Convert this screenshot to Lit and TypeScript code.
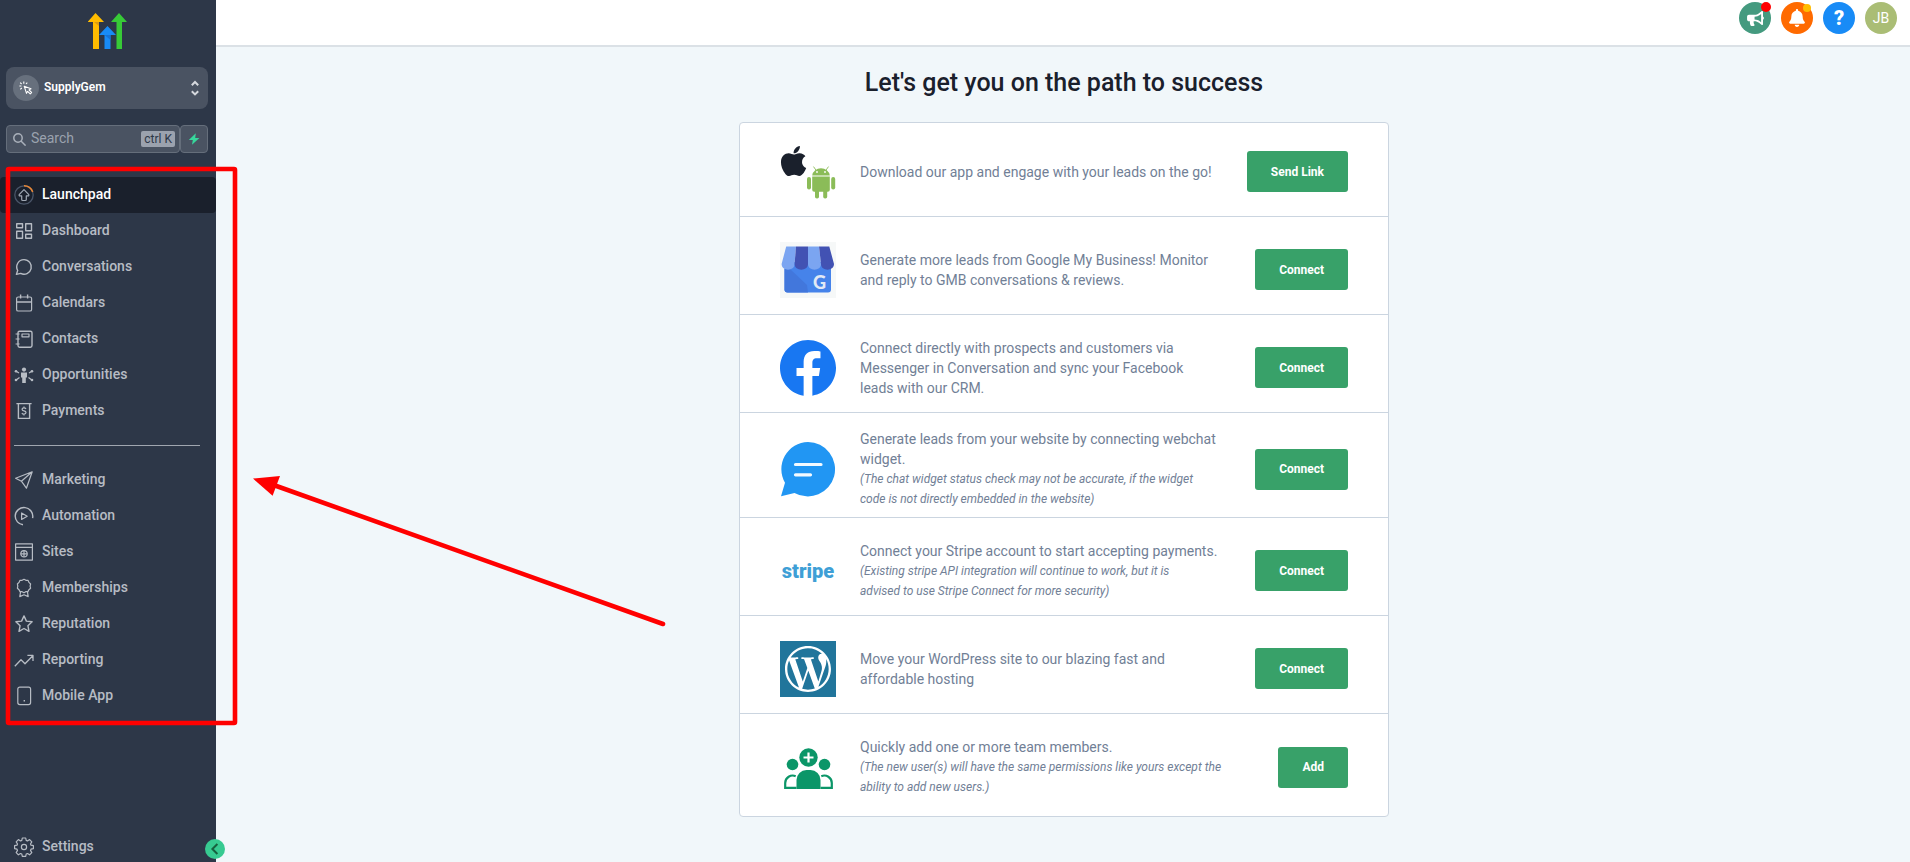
import { LitElement, html, css, svg, TemplateResult } from "lit";
import { customElement, property } from "lit/decorators.js";
import { classMap } from "lit/directives/class-map.js";

/* Line icons of the side menu, each drawn on a 20 x 20 grid. */
const navIcons: Record<string, TemplateResult> = {
  launchpad: svg`
    <circle cx="10" cy="10" r="9.2" stroke="#4a5568" stroke-width="1.3"/>
    <path d="M10 .8a9.2 9.2 0 0 1 8.7 6.2" stroke="#ed8936" stroke-width="1.5"/>
    <path d="M10 4.6 14.6 9.4c.6.7.3 1.5-.6 1.5h-1.7v3.6a1 1 0 0 1-1 1H8.7a1 1 0 0 1-1-1v-3.6H6c-.9 0-1.2-.8-.6-1.5z"/>`,
  dashboard: svg`<path d="M2.7 2.7h5.8v4H2.7zM11.7 2.7h5.8v7h-5.8zM2.7 10.2h5.8v7H2.7zM11.7 13.2h5.8v4h-5.8z" stroke-width="1.4"/>`,
  conversations: svg`<path d="M2.4 17.4l1.3-3.9A7.3 7.3 0 0 1 10 2.6a7.3 7.3 0 1 1-3.3 13.8z" stroke-width="1.4"/>`,
  calendars: svg`<rect x="2.6" y="4" width="15" height="14" rx="1.6"/><path d="M2.6 9h15M6.6 1.6v4M13.6 1.6v4" stroke-width="1.4"/>`,
  contacts: svg`<rect x="4" y="2.2" width="14" height="16" rx="1.6" stroke-width="1.4"/><rect x="8" y="5" width="7" height="2.8"/><path d="M1.6 5h4M1.6 10h4M1.6 15h4"/>`,
  opportunities: svg`
    <g fill="currentColor" stroke="none"><circle cx="10" cy="4.6" r="2.1"/><path d="M7 7.6h6v5h-1.2V18H8.2v-5.4H7z"/>
    <circle cx="2" cy="6.2" r="1.3"/><circle cx="18" cy="6.2" r="1.3"/><circle cx="2" cy="15" r="1.3"/><circle cx="18" cy="15" r="1.3"/></g>
    <path d="M2.500 6.400 5 8M17.500 6.400 15 8M2.500 14.800 5.500 12.600M17.500 14.800 14.500 12.600"/>`,
  payments: svg`<path d="M2.4 2.6h15.2M4.4 2.6v14.8h11.2V2.6" stroke-width="1.4"/><path d="M12 8c-.4-.8-1.1-1.1-2-1.1-1.2 0-1.9.6-1.9 1.5 0 2.2 3.9.9 3.9 3.2 0 .9-.8 1.5-2 1.5-1 0-1.7-.4-2.1-1.2M10 5.6v1.3M10 13.1v1.3"/>`,
  marketing: svg`<path d="M18.2 1.8 1.6 8.2l5.800 3zM18.2 1.8 12.4 18.200l-5-7z"/>`,
  automation: svg`<path d="M18.6 12.2A8.8 8.8 0 1 0 1.2 10c0 4.5 3.3 8.3 7.8 8.8" stroke-width="1.4"/><path d="M7.6 7v6.4l5.6-3.2z"/>`,
  sites: svg`<path d="M1.6 1.9h16.8v16.2H1.6zM1.6 5.4h16.8"/><circle cx="10" cy="11.8" r="3.2"/><path d="M6.800 11.8h6.4M10 8.6v6.4"/>`,
  memberships: svg`<path d="M10 1.3l1.9 1 2.2.1.9 2 1.6 1.6-.5 2.1.5 2.1-1.7 1.5-1 1.9-2.2.1-1.7 1.1-1.9-1.1-2.1-.1-1-1.9-1.6-1.5.4-2.1-.4-2.1 1.6-1.6.9-2 2.2-.1z"/><path d="M6.6 13.6 5.8 18.6 10 16.8l4.2 1.8-.8-5"/>`,
  reputation: svg`<path d="M10 1.9l2.4 5.2 5.7.7-4.2 3.9 1.1 5.6-5-2.8-5 2.8 1.1-5.6-4.2-3.9 5.7-.7z" stroke-width="1.4"/>`,
  reporting: svg`<path d="M.8 16.2 7 9.8l4 4 7.8-8M13.4 5.4h5.6v5.6" stroke-width="1.3"/>`,
  mobile: svg`<rect x="3.8" y="1.2" width="12.8" height="17.4" rx="2"/><path d="M9.6 14.8h1.4" stroke-width="1.6"/>`,
  settings: svg`<circle cx="10" cy="10" r="2.6"/><path d="M8.3 1h3.4l.5 2.4 1.3.6 2.1-1.4 2.2 2.3-1.3 2.1.5 1.2 2.4.5v2.9l-2.4.6-.5 1.2 1.3 2.2-2.2 2.2-2.1-1.3-1.3.5-.5 2.4H8.3l-.5-2.4-1.3-.5-2.1 1.3-2.2-2.2 1.3-2.2-.5-1.2-2.4-.6V8.7L3 8.2 3.5 7 2.2 4.9l2.2-2.3L6.5 4l1.3-.6z"/>`,
};

/* Brand pictures of the setup list, each drawn on a 56 x 56 grid. */
const brandIcons: Record<string, TemplateResult> = {
  apps: svg`
    <path transform="translate(.7 -.1) scale(.067)" fill="#1a202c" d="M318.7 268.7c-.2-36.7 16.4-64.4 50-84.8-18.8-26.9-47.2-41.7-84.7-44.6-35.5-2.8-74.3 20.7-88.5 20.7-15 0-49.4-19.7-76.4-19.7C63.3 141.2 4 184.8 4 273.5q0 39.3 14.4 81.2c12.8 36.7 59 126.7 107.2 125.2 25.2-.6 43-17.9 75.8-17.9 31.8 0 48.3 17.9 76.4 17.9 48.6-.7 90.4-82.5 102.6-119.3-65.2-30.7-61.7-90-61.7-91.9zm-56.6-164.2c27.3-32.4 24.8-61.9 24-72.5-24.1 1.4-52 16.4-67.9 34.9-17.5 19.8-27.8 44.3-25.6 71.9 26.1 2 49.9-11.4 69.5-34.3z"/>
    <g fill="#8bbc58"><path d="M32.2 31.4a8.9 8.4 0 0 1 17.6 0zM32.2 32.5h17.6v13.3a2 2 0 0 1-2 2h-13.6a2 2 0 0 1-2-2z"/>
    <rect x="27" y="33" width="4" height="12.6" rx="2"/><rect x="51.2" y="33" width="4" height="12.6" rx="2"/>
    <rect x="35" y="44" width="4" height="10.6" rx="1.8"/><rect x="43.2" y="44" width="4" height="10.6" rx="1.8"/></g>
    <path d="M33.5 22.6l2.4 3.4M48.5 22.6l-2.4 3.4" stroke="#8bbc58" stroke-width=".9"/>
    <circle cx="37" cy="28" r=".9" fill="#fff"/><circle cx="45" cy="28" r=".9" fill="#fff"/>`,
  gmb: svg`
    <rect width="56" height="56" fill="#f6f8f8"/>
    <path d="M4.5 20h46.5v27.5a3 3 0 0 1-3 3H7.5a3 3 0 0 1-3-3z" fill="#4683ea"/>
    <path d="M10 27l17 16 1 7.5H7.5a3 3 0 0 1-3-3V27z" fill="#4277dc"/>
    <path d="M6.2 4.5H16L14.6 22c0 7.5-13 7.5-13 0z" fill="#7ba5f1"/>
    <path d="M16 4.5h12V22c0 7.5-13.4 7.5-13.4 0z" fill="#4252b3"/>
    <path d="M28 4.5h11L41 22c0 7.5-13 7.5-13 0z" fill="#7ba5f1"/>
    <path d="M39 4.5h10.3L54 22c0 7.5-13 7.5-13 0z" fill="#4252b3"/>
    <text x="33" y="46.5" font-family="Lato, sans-serif" font-weight="900" font-size="18" fill="#e2e9f5">G</text>`,
  facebook: svg`<path transform="translate(-.9 -.9) scale(.1129)" fill="#1877f2" d="M504 256C504 119 393 8 256 8S8 119 8 256c0 123.78 90.69 226.38 209.25 245V327.69h-63V256h63v-54.64c0-62.15 37-96.48 93.67-96.48 27.14 0 55.52 4.84 55.52 4.84v61h-31.28c-30.8 0-40.41 19.12-40.41 38.73V256h68.78l-11 71.69h-57.78V501C413.31 482.38 504 379.78 504 256z"/>`,
  chat: svg`
    <path fill="#2196f3" d="M28 1a27.2 27.2 0 1 1-13.5 50.9L1 55.3l4-13.5A27.2 27.2 0 0 1 28 1z"/>
    <path d="M15.5 23.5h25.5M15.5 33.8h15" stroke="#f4faff" stroke-width="3.2" stroke-linecap="round"/>`,
  stripe: svg`<text x="28" y="35" text-anchor="middle" font-family="Roboto, sans-serif" font-weight="900" font-size="20" fill="#3f9fd6">stripe</text>`,
  wordpress: svg`
    <rect width="56" height="56" fill="#21759b"/>
    <path transform="translate(5 5) scale(1.916)" fill="#fff" d="M21.469 6.825c.84 1.537 1.318 3.3 1.318 5.175 0 3.979-2.156 7.456-5.363 9.325l3.295-9.527c.615-1.54.82-2.771.82-3.864 0-.405-.026-.78-.07-1.11m-7.981.105c.647-.03 1.232-.105 1.232-.105.582-.075.514-.93-.067-.899 0 0-1.755.135-2.88.135-1.064 0-2.85-.15-2.85-.15-.585-.03-.661.855-.075.885 0 0 .54.061 1.125.09l1.68 4.605-2.37 7.08L5.354 6.9c.649-.03 1.234-.1 1.234-.1.585-.075.516-.93-.065-.896 0 0-1.746.138-2.874.138-.2 0-.438-.008-.69-.015C4.911 3.15 8.235 1.215 12 1.215c2.809 0 5.365 1.072 7.286 2.833-.046-.003-.091-.009-.141-.009-1.06 0-1.812.923-1.812 1.914 0 .89.513 1.643 1.06 2.531.411.72.89 1.643.89 2.977 0 .915-.354 1.994-.821 3.479l-1.075 3.585-3.9-11.61.001.014zM12 22.784c-1.059 0-2.081-.153-3.048-.437l3.237-9.406 3.315 9.087c.024.053.05.101.078.149-1.12.393-2.325.609-3.582.609M1.211 12c0-1.564.336-3.05.935-4.39L7.29 21.709C3.694 19.96 1.212 16.271 1.211 12M12 0C5.385 0 0 5.385 0 12s5.385 12 12 12 12-5.385 12-12S18.615 0 12 0"/>`,
  team: svg`
    <g fill="#0b9668"><circle cx="28.500" cy="18.5" r="9.2"/><circle cx="12.500" cy="25.5" r="5.8"/><circle cx="44.500" cy="25.5" r="5.8"/>
    <path d="M16.5 50V41a10 10 0 0 1 10-10h4a10 10 0 0 1 10 10v9z"/></g>
    <path d="M16.5 48.9H5.2V44a7.5 7.5 0 0 1 10.5-6.8M40.5 48.9h11.3V44a7.5 7.5 0 0 0-10.5-6.8" fill="none" stroke="#0b9668" stroke-width="2.2"/>
    <path d="M28.5 13.5v10M23.5 18.5h10" stroke="#fff" stroke-width="2.2"/>`,
};

interface NavEntry { icon: string; label: string; active?: boolean; }
interface Task { icon: string; text: string; note?: string; action: string; }

const mainNav: NavEntry[] = [
  { icon: "launchpad", label: "Launchpad", active: true },
  { icon: "dashboard", label: "Dashboard" },
  { icon: "conversations", label: "Conversations" },
  { icon: "calendars", label: "Calendars" },
  { icon: "contacts", label: "Contacts" },
  { icon: "opportunities", label: "Opportunities" },
  { icon: "payments", label: "Payments" },
];

const growthNav: NavEntry[] = [
  { icon: "marketing", label: "Marketing" },
  { icon: "automation", label: "Automation" },
  { icon: "sites", label: "Sites" },
  { icon: "memberships", label: "Memberships" },
  { icon: "reputation", label: "Reputation" },
  { icon: "reporting", label: "Reporting" },
  { icon: "mobile", label: "Mobile App" },
];

const tasks: Task[] = [
  { icon: "apps", text: "Download our app and engage with your leads on the go!", action: "Send Link" },
  { icon: "gmb", text: "Generate more leads from Google My Business! Monitor and reply to GMB conversations & reviews.", action: "Connect" },
  { icon: "facebook", text: "Connect directly with prospects and customers via Messenger in Conversation and sync your Facebook leads with our CRM.", action: "Connect" },
  { icon: "chat", text: "Generate leads from your website by connecting webchat widget.", note: "(The chat widget status check may not be accurate, if the widget code is not directly embedded in the website)", action: "Connect" },
  { icon: "stripe", text: "Connect your Stripe account to start accepting payments.", note: "(Existing stripe API integration will continue to work, but it is advised to use Stripe Connect for more security)", action: "Connect" },
  { icon: "wordpress", text: "Move your WordPress site to our blazing fast and affordable hosting", action: "Connect" },
  { icon: "team", text: "Quickly add one or more team members.", note: "(The new user(s) will have the same permissions like yours except the ability to add new users.)", action: "Add" },
];

const base = css`
  * { box-sizing: border-box; }
  button { font: inherit; border: 0; padding: 0; cursor: pointer; }
  svg { display: block; flex: none; }
`;

@customElement("side-link")
class SideLink extends LitElement {
  static styles = [base, css`
    :host { display: block; }
    .link { display: flex; align-items: center; gap: 8px; height: 36px; padding: 0 14px; color: #b7bcc4;
      font-size: 14px; font-weight: 500; line-height: 20px; text-decoration: none; border-radius: 4px; }
    .active { background: #1a202c; color: #fff; }
    .active svg { color: #a0a8b4; }
    .label { padding-bottom: 2px; }
  `];
  @property() icon = "";
  @property() label = "";
  @property({ type: Boolean }) active = false;

  render() {
    return html`<a class=${classMap({ link: true, active: this.active })} href="#${this.icon}">
      <svg width="20" height="20" viewBox="0 0 20 20" fill="none" stroke="currentColor" stroke-width="1.2" stroke-linejoin="round" aria-hidden="true">${navIcons[this.icon]}</svg>
      <span class="label">${this.label}</span>
    </a>`;
  }
}

@customElement("side-bar")
class SideBar extends LitElement {
  static styles = [base, css`
    :host { display: flex; flex-direction: column; position: relative; width: 216px; flex: none;
      padding-top: 13px; background: #2d3748; }
    .logo { align-self: center; margin: 0 0 18px; }
    .account { display: flex; align-items: center; gap: 5px; height: 42px; margin: 0 8px 16px 6px; padding: 0 8px 0 7px;
      border-radius: 8px; background: #4a5362; color: #fff; font-size: 12px; font-weight: 600; text-align: left; }
    .badge { display: grid; place-items: center; width: 26px; height: 26px; border-radius: 50%; background: #67707d; }
    .name { flex: 1; padding-bottom: 2px; }
    .tools { display: flex; height: 28px; margin: 0 8px 24px 6px; }
    .search { display: flex; align-items: center; gap: 5px; flex: 1; min-width: 0; padding: 0 4px 0 6px;
      border: 1px solid #656e7b; border-radius: 4px; background: #4a5362; }
    .field { flex: 1; min-width: 0; width: 0; padding: 0 0 2px; border: 0; outline: 0; background: none; color: #fff;
      font: 14px/20px Roboto, sans-serif; }
    .field::placeholder { color: #9aa2ae; opacity: 1; }
    .keys { padding: 0 3px; border-radius: 2px; background: #9ba2ae; color: #2d3748; font: 12px/16px Roboto, sans-serif; white-space: nowrap; }
    .bolt { display: grid; place-items: center; width: 28px; border: 1px solid #656e7b; border-radius: 4px; background: #4a5362; }
    .divider { height: 1px; margin: 16px 16px 16px 14px; border: 0; background: #a0a6b0; }
    .settings { margin: auto 0 -3px; }
    .collapse { position: absolute; right: -9px; bottom: 3px; display: grid; place-items: center; width: 20px; height: 20px;
      border-radius: 50%; background: #37ca91; }
  `];

  private links(list: NavEntry[]) {
    return list.map((n) => html`<side-link .icon=${n.icon} .label=${n.label} ?active=${n.active}></side-link>`);
  }

  render() {
    return html`
      <svg class="logo" width="40" height="36" viewBox="0 0 40 36" aria-hidden="true">
        <path fill="#ffbc00" d="M7.500 0l8.500 9h-5v27H5V9h-5.500z"/><path fill="#d99b13" d="M6 9h5v4z"/>
        <path fill="#37ca37" d="M31 0l8 9h-5v27h-5.500V9h-5.500z"/>
        <path fill="#188bf6" d="M19.500 13l8.500 9h-5.500v14h-6V22H11z"/><path fill="#1573d6" d="M16.500 22h6v5z"/>
      </svg>
      <button class="account" type="button">
        <span class="badge"><svg width="14" height="14" viewBox="0 0 14 14" fill="none" stroke="#fff" stroke-width="1.1" stroke-linejoin="round" aria-hidden="true">
          <path d="M5.2 5.2l6.800 2.500-2 1.200 2.600 2.600-1.400 1.400-2.600-2.600-1.100 2z"/><path d="M4.800 2.800V.6M2.600 3 1.200 1.600M2.400 5H.4M2.800 7 1.300 8.400M7 3l1.300-1.400"/></svg></span>
        <span class="name">SupplyGem</span>
        <svg width="10" height="16" viewBox="0 0 10 16" fill="none" stroke="#d5d8dd" stroke-width="2" aria-hidden="true"><path d="M1.800 5.200 5 2l3.200 3.200M1.800 11.200 5 14.400l3.200-3.200"/></svg>
      </button>
      <div class="tools">
        <label class="search">
          <svg width="13" height="13" viewBox="0 0 13 13" fill="none" stroke="#a9b0ba" stroke-width="1.5" aria-hidden="true"><circle cx="5" cy="5" r="4.2"/><path d="M8 8l4.600 4.600"/></svg>
          <input class="field" type="text" placeholder="Search" aria-label="Search" />
          <kbd class="keys">ctrl K</kbd>
        </label>
        <button class="bolt" type="button" aria-label="Quick actions">
          <svg width="12" height="12" viewBox="0 0 12 12" fill="#37d69b" aria-hidden="true"><path d="M7.800.2.8 7h4L4 11.800 11.400 5H7.200z"/></svg>
        </button>
      </div>
      <nav>
        ${this.links(mainNav)}
        <hr class="divider" />
        ${this.links(growthNav)}
      </nav>
      <side-link class="settings" icon="settings" label="Settings"></side-link>
      <button class="collapse" type="button" aria-label="Collapse menu">
        <svg width="12" height="12" viewBox="0 0 12 12" fill="none" stroke="#17603f" stroke-width="2" aria-hidden="true"><path d="M8.400 1 3.400 6l5 5"/></svg>
      </button>`;
  }
}

@customElement("top-bar")
class TopBar extends LitElement {
  static styles = [base, css`
    :host { display: flex; justify-content: flex-end; gap: 10px; height: 47px; padding: 2px 13px 0; background: #fff;
      border-bottom: 2px solid #dbe1e6; }
    .round { position: relative; display: grid; place-items: center; width: 32px; height: 32px; border-radius: 50%; color: #fff; line-height: 32px; }
    .news { background: #449a7f; }
    .alerts { background: #ff6a00; }
    .help { background: #188bf6; font-size: 20px; font-weight: 900; }
    .user { background: #aabd75; font-size: 14px; }
    .dot { position: absolute; border-radius: 50%; top: 0; right: 0; }
    .red { width: 10px; height: 10px; background: #f00; }
    .yellow { width: 8px; height: 8px; top: 2px; right: 2px; background: #ffbc00; }
  `];

  render() {
    return html`
      <button class="round news" type="button" aria-label="News">
        <svg width="17" height="15" viewBox="0 0 576 512" fill="#fff" aria-hidden="true"><path d="M576 240c0-23.63-12.95-44.04-32-55.12V32.01C544 23.26 537.02 0 512 0c-7.12 0-14.19 2.38-19.98 7.02l-85.03 68.03C364.28 109.19 310.66 128 256 128H64c-35.35 0-64 28.65-64 64v96c0 35.35 28.65 64 64 64h33.7c-1.39 10.48-2.18 21.14-2.18 32 0 39.77 9.26 77.35 25.56 110.94 5.19 10.69 16.52 17.06 28.4 17.06h74.28c26.05 0 41.69-29.84 25.9-50.56-16.4-21.52-26.15-48.36-26.15-77.44 0-11.11 1.62-21.79 4.41-32H256c54.66 0 108.28 18.81 150.98 52.95l85.03 68.03a32.023 32.023 0 0 0 19.98 7.02c24.92 0 32-22.78 32-32V295.13C563.05 284.04 576 263.63 576 240zm-96 141.42l-33.05-26.44C392.95 311.78 325.12 288 256 288v-96c69.12 0 136.95-23.78 190.95-66.98L480 98.58v282.84z"/></svg>
        <span class="dot red"></span>
      </button>
      <button class="round alerts" type="button" aria-label="Notifications">
        <svg width="16" height="18" viewBox="0 0 448 512" fill="#fff" aria-hidden="true"><path d="M224 512c35.32 0 63.97-28.65 63.97-64H160.03c0 35.35 28.65 64 63.97 64zm215.39-149.71c-19.32-20.76-55.47-51.99-55.47-154.29 0-77.7-54.48-139.9-127.94-155.16V32c0-17.67-14.32-32-31.98-32s-31.98 14.33-31.98 32v20.84C118.56 68.1 64.08 130.3 64.08 208c0 102.3-36.15 133.53-55.47 154.29-6 6.45-8.66 14.16-8.61 21.71.11 16.4 12.98 32 32.1 32h383.8c19.12 0 32-15.6 32.1-32 .05-7.55-2.61-15.27-8.61-21.71z"/></svg>
        <span class="dot yellow"></span>
      </button>
      <button class="round help" type="button" aria-label="Help">?</button>
      <button class="round user" type="button" aria-label="Account">JB</button>`;
  }
}

@customElement("task-list")
class TaskList extends LitElement {
  static styles = [base, css`
    :host { display: block; width: 100%; max-width: 650px; }
    .card { margin: 0; padding: 0; list-style: none; border: 1px solid #cbd5e0; border-radius: 4px; background: #fff; }
    .row { display: flex; align-items: center; min-height: 98px; padding: 16px 40px 8px; border-bottom: 1px solid #cbd5e0; }
    .row:first-child { min-height: 94px; padding-top: 12px; }
    .row:last-child { min-height: 102px; padding-top: 12px; border-bottom: 0; }
    .copy { flex: 1; min-width: 0; max-width: 359px; margin: 0 32px 0 24px; color: #718096; font-size: 14px; line-height: 20px; }
    .row:last-child .copy { max-width: none; }
    .note { display: block; padding-right: 8px; font-size: 12px; font-style: italic; }
    .action { flex: none; height: 41px; margin-left: auto; padding: 0 24px; border-radius: 3px; background: #38a169; color: #fff;
      font-size: 12px; font-weight: 700; }
  `];

  render() {
    return html`<ul class="card">
      ${tasks.map((t) => html`<li class="row">
        <svg width="56" height="56" viewBox="0 0 56 56" aria-hidden="true">${brandIcons[t.icon]}</svg>
        <div class="copy">${t.text}${t.note ? html`<em class="note">${t.note}</em>` : ""}</div>
        <button class="action" type="button">${t.action}</button>
      </li>`)}
    </ul>`;
  }
}

@customElement("app-root")
class AppRoot extends LitElement {
  static styles = [base, css`
    :host { display: flex; position: relative; min-height: 100vh; background: #f1f7fa; overflow: hidden;
      font-family: Roboto, sans-serif; }
    .page { flex: 1; min-width: 0; display: flex; flex-direction: column; }
    .content { display: flex; flex-direction: column; align-items: center; padding: 20px 16px 24px 18px; }
    .title { margin: 0 0 23px; color: #1a202c; font-size: 25px; font-weight: 500; line-height: 32px; }
    .marks { position: absolute; top: 0; left: 0; pointer-events: none; }
  `];

  render() {
    return html`
      <side-bar></side-bar>
      <div class="page">
        <top-bar></top-bar>
        <main class="content">
          <h1 class="title">Let's get you on the path to success</h1>
          <task-list></task-list>
        </main>
      </div>
      <svg class="marks" width="680" height="740" viewBox="0 0 680 740" fill="none" stroke="#f00" aria-hidden="true">
        <rect x="8" y="169" width="227" height="554" rx="1" stroke-width="4.6"/>
        <path d="M663 624 275 485.500" stroke-width="4.6" stroke-linecap="round"/>
        <path d="M253 478.500 280 476l-7.400 19.700z" fill="#f00" stroke="none"/>
      </svg>`;
  }
}
